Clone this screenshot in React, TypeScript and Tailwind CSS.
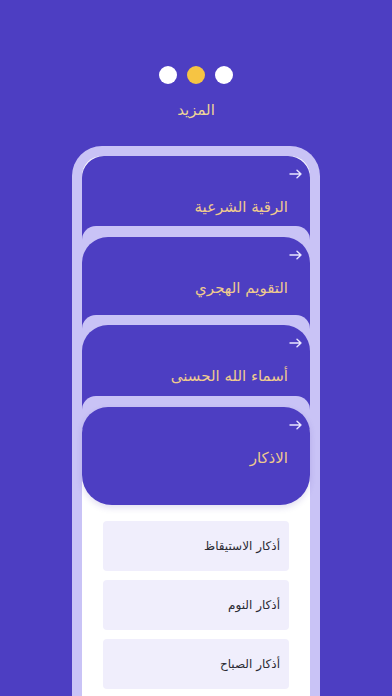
import React from "react";

const purple = "bg-[#4d3ec2]";

const Arrow = () => (
  <svg width="13" height="10" viewBox="0 0 13 10" fill="none" stroke="#e9e6ff" strokeWidth="1.4" strokeLinecap="round" strokeLinejoin="round">
    <path d="M1 5h11M8 1.2L12 5 8 8.8" />
  </svg>
);

const CardBody = ({ title }: { title: string }) => (
  <>
    <div className="flex justify-end pr-[8px] pt-[13px]">
      <Arrow />
    </div>
    <p dir="rtl" className="mt-[16px] pr-[22px] text-right text-[15px] leading-[24px] text-[#efcb8e]">
      {title}
    </p>
  </>
);

const zikr = ["أذكار الاستيقاظ", "أذكار النوم", "أذكار الصباح"];

const App = () => {
  return (
    <div
      className={`h-[696px] w-full overflow-hidden ${purple} flex flex-col items-center pt-[66px]`}
      style={{ fontFamily: '"DejaVu Sans", "Noto Sans", sans-serif' }}
    >
      {/* dots */}
      <div className="flex gap-[10px]">
        <span className="h-[18px] w-[18px] rounded-full bg-white" />
        <span className="h-[18px] w-[18px] rounded-full bg-[#f6c443]" />
        <span className="h-[18px] w-[18px] rounded-full bg-white" />
      </div>
      <p dir="rtl" className="mt-[14px] text-[15px] leading-[24px] text-[#eed597]">المزيد</p>

      {/* phone frame */}
      <div className="mt-[24px] w-[248px] flex-1 rounded-t-[30px] border-x-[10px] border-t-[10px] border-[#c9c3f6] bg-white">
        {/* card 1 */}
        <div className={`h-[70px] rounded-t-[22px] ${purple}`}>
          <CardBody title="الرقية الشرعية" />
        </div>

        {/* card 2 */}
        <div className={purple}>
          <div className="rounded-t-[14px] bg-[#c9c3f6] pt-[11px]">
            <div className={`h-[78px] rounded-t-[26px] ${purple}`}>
              <CardBody title="التقويم الهجري" />
            </div>
          </div>
        </div>

        {/* card 3 */}
        <div className={purple}>
          <div className="rounded-t-[14px] bg-[#c9c3f6] pt-[10px]">
            <div className={`h-[71px] rounded-t-[26px] ${purple}`}>
              <CardBody title="أسماء الله الحسنى" />
            </div>
          </div>
        </div>

        {/* card 4 */}
        <div className="bg-linear-to-b from-[#4d3ec2] from-30% to-white to-30%">
          <div className="rounded-t-[14px] bg-linear-to-b from-[#c9c3f6] from-30% to-white to-30% pt-[11px]">
            <div className={`h-[98px] rounded-t-[26px] rounded-b-[30px] ${purple} shadow-[0_3px_6px_rgba(60,40,160,0.15)]`}>
              <CardBody title="الاذكار" />
            </div>
          </div>
        </div>

        {/* list */}
        <div className="mt-[16px] flex flex-col gap-[9px] px-[21px]">
          {zikr.map((z) => (
            <div key={z} className="flex h-[50px] items-center justify-end rounded-[4px] bg-[#f0eefc] pr-[9px]">
              <span dir="rtl" className="text-[12px] text-[#2b2b33]">{z}</span>
            </div>
          ))}
        </div>
      </div>
    </div>
  );
};

export default App;
